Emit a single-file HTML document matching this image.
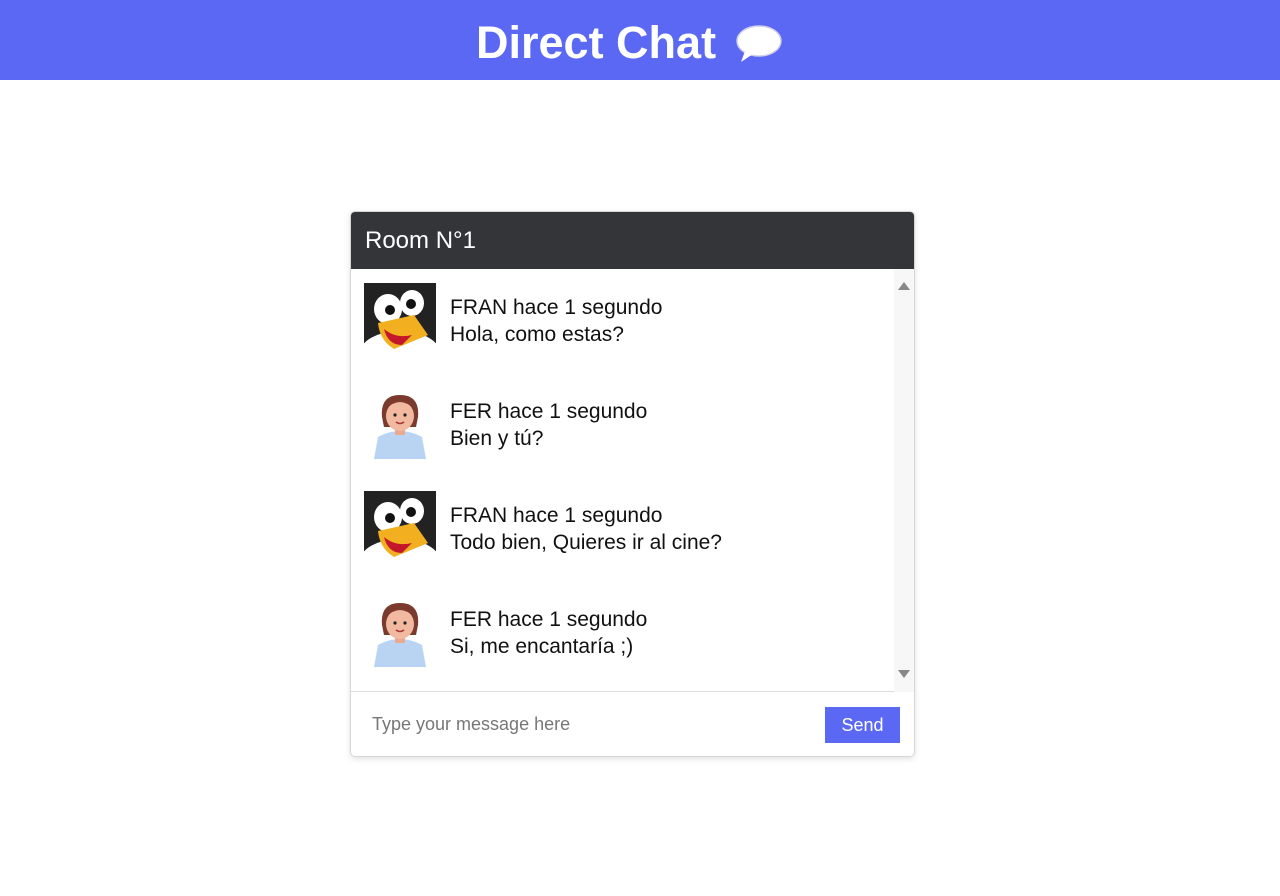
<!DOCTYPE html>
<html><head><meta charset="utf-8"><style>
*{margin:0;padding:0;box-sizing:border-box}
body{width:1280px;height:896px;background:#fff;font-family:"Liberation Sans",Arial,sans-serif;position:relative;overflow:hidden}
.top{position:absolute;left:0;top:0;width:1280px;height:80px;background:#5b68f3;color:#fff}
.top h1{position:absolute;left:476px;top:0;font-size:45px;font-weight:bold;line-height:86px;white-space:nowrap}
.card{position:absolute;left:350px;top:211px;width:565px;height:546px;border:1px solid #d6d6d6;border-radius:5px;box-shadow:0 2px 6px rgba(0,0,0,.12);overflow:hidden}
.ch{height:57px;background:#343539;color:#fff;font-size:24px;padding-left:14px;line-height:57px}
.msgs{position:absolute;top:57px;left:0;width:563px;height:423px;border-bottom:1px solid #ddd}
.sb{position:absolute;right:0;top:0;width:20px;height:423px;background:#f7f7f7}
.m{position:absolute;left:13px;width:500px;height:72px}
.m svg{position:absolute;left:0;top:0}
.t{position:absolute;left:86px;top:11px;font-size:21px;line-height:27px;color:#111;white-space:nowrap}
.in{position:absolute;top:482px;left:0;width:563px;height:63px}
.ph{position:absolute;left:21px;top:20px;font-size:18px;color:#777}
.btn{position:absolute;left:474px;top:13px;width:75px;height:36px;background:#5b68f3;color:#fff;font-size:18px;text-align:center;line-height:36px}
</style></head><body>
<div class="top"><h1>Direct Chat</h1>
<svg style="position:absolute;left:735px;top:24px" width="48" height="40" viewBox="0 0 48 40"><ellipse cx="24" cy="17" rx="22" ry="15" fill="#fff" stroke="#cfcfe8" stroke-width="1.5"/><path d="M10 27 L6 38 L18 30Z" fill="#fff"/></svg></div>
<div class="card">
<div class="ch">Room N°1</div>
<div class="msgs">
<div class="sb"><svg width="20" height="423"><path d="M4 21 L10 13 L16 21Z" fill="#888"/><path d="M4 401 L10 409 L16 401Z" fill="#888"/></svg></div>
<div class="m" style="top:14px"><svg width="72" height="72" viewBox="0 0 72 72"><rect width="72" height="72" fill="#222"/><ellipse cx="36" cy="70" rx="40" ry="22" fill="#fff"/><ellipse cx="24" cy="26" rx="14" ry="15" fill="#fff"/><ellipse cx="48" cy="20" rx="12" ry="13" fill="#fff"/><circle cx="26" cy="27" r="5" fill="#111"/><circle cx="47" cy="21" r="5" fill="#111"/><path d="M14 40 L50 32 L64 52 L30 66 Q16 58 14 40Z" fill="#f2b020"/><path d="M20 46 Q24 62 38 62 L48 52 Q32 56 20 46Z" fill="#c4182a"/></svg><div class="t">FRAN hace 1 segundo<br>Hola, como estas?</div></div>
<div class="m" style="top:118px"><svg width="72" height="72" viewBox="0 0 72 72"><path d="M14 50 Q36 38 58 50 L62 72 L10 72Z" fill="#b9d4f2"/><rect x="31" y="38" width="10" height="10" fill="#e9a88f"/><path d="M18 30 Q16 8 36 8 Q56 8 54 30 L52 40 L20 40Z" fill="#7a3a2e"/><ellipse cx="36" cy="29" rx="14" ry="15" fill="#f2b8a0"/><path d="M22 22 Q36 8 50 22 L50 16 Q36 4 22 16Z" fill="#7a3a2e"/><circle cx="31" cy="28" r="1.6" fill="#222"/><circle cx="41" cy="28" r="1.6" fill="#222"/><path d="M32 35 Q36 38 40 35" stroke="#a33" stroke-width="1.5" fill="none"/></svg><div class="t">FER hace 1 segundo<br>Bien y tú?</div></div>
<div class="m" style="top:222px"><svg width="72" height="72" viewBox="0 0 72 72"><rect width="72" height="72" fill="#222"/><ellipse cx="36" cy="70" rx="40" ry="22" fill="#fff"/><ellipse cx="24" cy="26" rx="14" ry="15" fill="#fff"/><ellipse cx="48" cy="20" rx="12" ry="13" fill="#fff"/><circle cx="26" cy="27" r="5" fill="#111"/><circle cx="47" cy="21" r="5" fill="#111"/><path d="M14 40 L50 32 L64 52 L30 66 Q16 58 14 40Z" fill="#f2b020"/><path d="M20 46 Q24 62 38 62 L48 52 Q32 56 20 46Z" fill="#c4182a"/></svg><div class="t">FRAN hace 1 segundo<br>Todo bien, Quieres ir al cine?</div></div>
<div class="m" style="top:326px"><svg width="72" height="72" viewBox="0 0 72 72"><path d="M14 50 Q36 38 58 50 L62 72 L10 72Z" fill="#b9d4f2"/><rect x="31" y="38" width="10" height="10" fill="#e9a88f"/><path d="M18 30 Q16 8 36 8 Q56 8 54 30 L52 40 L20 40Z" fill="#7a3a2e"/><ellipse cx="36" cy="29" rx="14" ry="15" fill="#f2b8a0"/><path d="M22 22 Q36 8 50 22 L50 16 Q36 4 22 16Z" fill="#7a3a2e"/><circle cx="31" cy="28" r="1.6" fill="#222"/><circle cx="41" cy="28" r="1.6" fill="#222"/><path d="M32 35 Q36 38 40 35" stroke="#a33" stroke-width="1.5" fill="none"/></svg><div class="t">FER hace 1 segundo<br>Si, me encantaría ;)</div></div>
</div>
<div class="in"><div class="ph">Type your message here</div><div class="btn">Send</div></div>
</div>
</body></html>
